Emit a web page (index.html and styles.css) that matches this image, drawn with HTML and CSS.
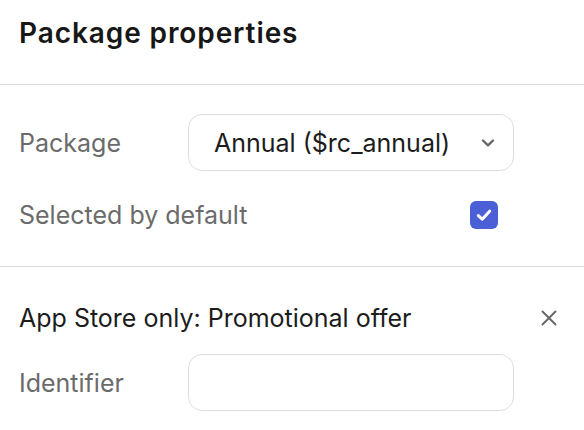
FILE: index.html
```html
<!DOCTYPE html>
<html>
<head>
<meta charset="utf-8">
<link rel="stylesheet" href="styles.css">
</head>
<body>
<div class="panel">
  <header class="panel-header">
    <h1 class="panel-title">Package properties</h1>
  </header>
  <section class="section section-package">
    <div class="row">
      <span class="label label-fixed">Package</span>
      <div class="select">
        <span class="select-value">Annual ($rc_annual)</span>
        <svg class="chevron" width="14" height="10" viewBox="0 0 14 10"><path d="M2 2.5 L7 7.3 L12 2.5" fill="none" stroke="#666" stroke-width="2.4" stroke-linecap="round" stroke-linejoin="round"/></svg>
      </div>
    </div>
    <div class="row">
      <span class="label">Selected by default</span>
      <div class="check-wrap">
        <span class="checkbox">
          <svg width="28" height="28" viewBox="0 0 28 28"><path d="M8.3 14.6 L12.2 18.2 L19.7 10.2" fill="none" stroke="#fff" stroke-width="3" stroke-linecap="round" stroke-linejoin="round"/></svg>
        </span>
      </div>
    </div>
  </section>
  <section class="section section-offer">
    <div class="offer-head">
      <span class="offer-title">App Store only: Promotional offer</span>
      <svg class="close" width="16" height="16" viewBox="0 0 16 16"><path d="M1.5 1.5 L14.5 14.5 M14.5 1.5 L1.5 14.5" fill="none" stroke="#666" stroke-width="1.9" stroke-linecap="round"/></svg>
    </div>
    <div class="row">
      <span class="label label-fixed">Identifier</span>
      <div class="input"></div>
    </div>
  </section>
</div>
</body>
</html>
```

FILE: styles.css
```css
html, body {
  margin: 0;
  padding: 0;
  background: #fff;
}
body {
  font-family: Inter, "Noto Sans", sans-serif;
  color: #1c1c1c;
  width: 584px;
  height: 430px;
  overflow: hidden;
}
.panel-header {
  height: 85px;
  box-sizing: border-box;
  padding: 0 19px 18px;
  display: flex;
  align-items: center;
  border-bottom: 1px solid #dcdcdc;
}
.panel-title {
  margin: 0;
  font-size: 28px;
  font-weight: 600;
  letter-spacing: 0.9px;
  color: #171717;
}
.section {
  padding: 29px 70px 23px 19px;
}
.section-package {
  border-bottom: 1px solid #dcdcdc;
  display: flex;
  flex-direction: column;
  gap: 15px;
}
.row {
  display: flex;
  align-items: center;
  height: 57px;
}
.label {
  font-size: 25px;
  color: #6b6b6b;
  white-space: nowrap;
}
.label-fixed {
  width: 169px;
  flex: none;
}
.select {
  flex: 1;
  height: 57px;
  box-sizing: border-box;
  border: 1px solid #dedede;
  border-radius: 14px;
  display: flex;
  align-items: center;
  padding: 0 18px 0 25px;
}
.select-value {
  flex: 1;
  font-size: 25px;
  color: #1c1c1c;
  white-space: nowrap;
}
.chevron {
  flex: none;
}
.check-wrap {
  flex: 1;
  display: flex;
  justify-content: flex-end;
  padding-right: 16px;
}
.checkbox {
  width: 28px;
  height: 28px;
  border-radius: 6px;
  background: #4b5fd6;
  display: flex;
}
.section-offer {
  padding-top: 37px;
  padding-right: 70px;
}
.offer-head {
  display: flex;
  align-items: center;
  height: 28px;
  margin-right: -43px;
  margin-bottom: 22px;
}
.offer-title {
  flex: 1;
  font-size: 25px;
  color: #1c1c1c;
  white-space: nowrap;
}
.close {
  flex: none;
}
.input {
  flex: 1;
  height: 57px;
  box-sizing: border-box;
  border: 1px solid #dedede;
  border-radius: 14px;
}
```
